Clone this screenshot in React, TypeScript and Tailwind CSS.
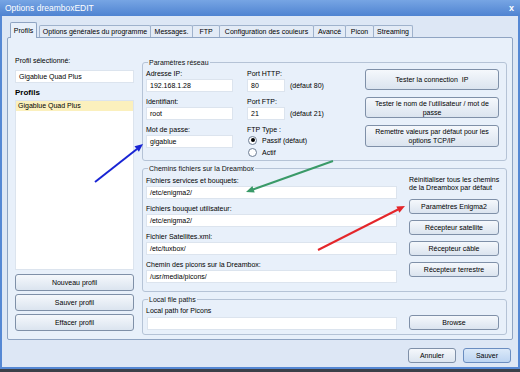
import type { ReactNode } from "react";

const tabs = [
  { label: "Profils", w: "w-[27px]", active: true },
  { label: "Options générales du programme", w: "w-[112px]" },
  { label: "Messages.", w: "w-[43px]" },
  { label: "FTP", w: "w-[28px]" },
  { label: "Configuration des couleurs", w: "w-[95px]" },
  { label: "Avancé", w: "w-[33px]" },
  { label: "Picon", w: "w-[29px]" },
  { label: "Streaming", w: "w-[40px]" },
];

function Group({ title, className, children }: { title: string; className?: string; children: ReactNode }) {
  return (
    <fieldset className={`rounded-[3px] border border-[#b5c3d6] px-[3px] ${className ?? ""}`}>
      <legend className="ml-[2px] px-[1px] leading-[9px] text-[#111]">{title}</legend>
      {children}
    </fieldset>
  );
}

function Field({ value, className }: { value?: string; className?: string }) {
  return (
    <div className={`h-[13px] border border-[#dce4ee] bg-white px-[3px] leading-[11px] ${className ?? ""}`}>
      {value}
    </div>
  );
}

function Btn({ children, className }: { children: ReactNode; className?: string }) {
  return (
    <div
      className={`flex items-center justify-center rounded-[3px] border border-[#7f90a8] bg-gradient-to-b from-[#f5f8fc] to-[#dbe4ef] text-center leading-[9px] ${className ?? ""}`}
    >
      {children}
    </div>
  );
}

export default function App() {
  return (
    <div
      className="relative h-[372px] w-[520px] overflow-hidden bg-[#3b4049] text-[7px] leading-[9px] text-black"
      style={{ fontFamily: '"Liberation Sans", Arial, sans-serif' }}
    >
      <div className="flex h-[369px] flex-col border-x-2 border-b-2 border-[#5588d4] bg-[#dde7f5]">
        {/* Title bar */}
        <div className="-mx-[2px] flex h-[16px] items-center justify-between bg-gradient-to-b from-[#77a5e4] to-[#4f83d1] px-[5px] text-[8.5px] text-white">
          <span>Options dreamboxEDIT</span>
          <span className="mr-[1px] font-bold text-[9px]">x</span>
        </div>

        <div className="flex flex-1 flex-col px-[5px] pt-[6px]">
          {/* Tabs */}
          <div className="relative z-10 -mb-px flex items-end whitespace-nowrap pl-[3px]">
            {tabs.map((t) =>
              t.active ? (
                <div
                  key={t.label}
                  className={`${t.w} mr-[2px] flex h-[16px] items-center justify-center rounded-t-[2px] border border-b-0 border-[#8fa4c2] bg-[#e8f0fa]`}
                >
                  {t.label}
                </div>
              ) : (
                <div
                  key={t.label}
                  className={`${t.w} -mr-px mb-[1px] flex h-[12px] items-center justify-center rounded-t-[2px] border border-b-0 border-[#9fb2cc] bg-[#e3ebf6]`}
                >
                  {t.label}
                </div>
              )
            )}
          </div>

          {/* Panel */}
          <div className="flex h-[303px] rounded-[2px] border border-[#8fa4c2] bg-[#e8f0fa] pl-[7px] pr-[4px]">
            {/* Left column */}
            <div className="flex w-[119px] flex-col pt-[18px]">
              <div className="h-[9px]">Profil sélectionné:</div>
              <Field value="Gigablue Quad Plus" className="mt-[5px]" />
              <div className="mt-[5px] h-[9px] text-[8px] font-bold">Profils</div>
              <div className="mt-[3px] h-[170px] border border-[#dce4ee] bg-white">
                <div className="h-[10px] bg-[#fbf0bd] px-[2px] leading-[10px]">Gigablue Quad Plus</div>
              </div>
              <div className="mt-[4px] flex flex-col gap-[3px]">
                <Btn className="h-[17px]">Nouveau profil</Btn>
                <Btn className="h-[17px]">Sauver profil</Btn>
                <Btn className="h-[17px]">Effacer profil</Btn>
              </div>
            </div>

            {/* Right column */}
            <div className="ml-[8px] flex w-[365px] flex-col pt-[20px]">
              <Group title="Paramètres réseau">
                <div className="flex pb-[2px] pt-[2px]">
                  <div className="flex w-[87px] flex-col">
                    <div className="h-[9px]">Adresse IP:</div>
                    <Field value="192.168.1.28" className="mt-[1px]" />
                    <div className="mt-[5px] h-[9px]">Identifiant:</div>
                    <Field value="root" className="mt-[1px]" />
                    <div className="mt-[5px] h-[9px]">Mot de passe:</div>
                    <Field value="gigablue" className="mt-[1px]" />
                  </div>
                  <div className="ml-[14px] flex w-[116px] flex-col">
                    <div className="h-[9px]">Port HTTP:</div>
                    <div className="mt-[1px] flex items-center">
                      <Field value="80" className="w-[38px]" />
                      <span className="ml-[5px]">(défaut 80)</span>
                    </div>
                    <div className="mt-[5px] h-[9px]">Port FTP:</div>
                    <div className="mt-[1px] flex items-center">
                      <Field value="21" className="w-[38px]" />
                      <span className="ml-[5px]">(défaut 21)</span>
                    </div>
                    <div className="mt-[5px] h-[9px]">FTP Type :</div>
                    <div className="flex h-[12px] items-center">
                      <span className="ml-[1px] flex h-[9px] w-[9px] items-center justify-center rounded-full border border-[#6d7d93] bg-white">
                        <span className="h-[4px] w-[4px] rounded-full bg-black" />
                      </span>
                      <span className="ml-[5px]">Passif (défaut)</span>
                    </div>
                    <div className="flex h-[12px] items-center">
                      <span className="ml-[1px] h-[9px] w-[9px] rounded-full border border-[#6d7d93] bg-white" />
                      <span className="ml-[5px]">Actif</span>
                    </div>
                  </div>
                  <div className="ml-[2px] flex w-[134px] flex-col gap-[7px]">
                    <Btn className="h-[21px]">Tester la connection&nbsp; IP</Btn>
                    <Btn className="h-[21px] whitespace-nowrap">
                      Tester le nom de l'utilisateur / mot de
                      <br />
                      passe
                    </Btn>
                    <Btn className="h-[22px] whitespace-nowrap">
                      Remettre valeurs par défaut pour les
                      <br />
                      options TCP/IP
                    </Btn>
                  </div>
                </div>
              </Group>

              <Group title="Chemins fichiers sur la Dreambox" className="mt-[3px]">
                <div className="flex pb-[8px] pt-[3px]">
                  <div className="flex w-[251px] flex-col">
                    <div className="h-[9px]">Fichiers services et bouquets:</div>
                    <Field value="/etc/enigma2/" className="mt-[1px]" />
                    <div className="mt-[5px] h-[9px]">Fichiers bouquet utilisateur:</div>
                    <Field value="/etc/enigma2/" className="mt-[1px]" />
                    <div className="mt-[5px] h-[9px]">Fichier Satellites.xml:</div>
                    <Field value="/etc/tuxbox/" className="mt-[1px]" />
                    <div className="mt-[5px] h-[9px]">Chemin des picons sur la Dreambox:</div>
                    <Field value="/usr/media/picons/" className="mt-[1px]" />
                  </div>
                  <div className="ml-[12px] flex w-[90px] flex-col">
                    <div className="whitespace-nowrap leading-[8px]">
                      Réinitialiser tous les chemins
                      <br />
                      de la Dreambox par défaut
                    </div>
                    <div className="mt-[7px] flex flex-col gap-[6px]">
                      <Btn className="h-[15px]">Paramètres Enigma2</Btn>
                      <Btn className="h-[15px]">Récepteur satellite</Btn>
                      <Btn className="h-[15px]">Récepteur câble</Btn>
                      <Btn className="h-[15px]">Récepteur terrestre</Btn>
                    </div>
                  </div>
                </div>
              </Group>

              <Group title="Local file paths" className="mt-[3px]">
                <div className="pb-[4px] pt-[2px]">
                  <div className="h-[9px]">Local path for Picons</div>
                  <div className="flex items-end">
                    <Field className="ml-[1px] w-[250px]" />
                    <Btn className="ml-[12px] h-[15px] w-[90px]">Browse</Btn>
                  </div>
                </div>
              </Group>
            </div>
          </div>

          {/* Dialog buttons */}
          <div className="mr-[2px] mt-[8px] flex justify-end gap-[7px]">
            <Btn className="h-[15px] w-[48px]">Annuler</Btn>
            <div className="flex h-[15px] w-[48px] items-center justify-center rounded-[3px] border border-[#6a8dc0] bg-gradient-to-b from-[#dbe9f9] to-[#bcd4f1]">
              Sauver
            </div>
          </div>
        </div>
      </div>

      {/* Annotation arrows */}
      <svg className="pointer-events-none absolute left-0 top-0" width="520" height="372" viewBox="0 0 520 372">
        <line x1="95" y1="182" x2="137" y2="149" stroke="#1824d4" strokeWidth="2" />
        <polygon points="143,144 138.9,151.7 134.5,146.3" fill="#1824d4" />
        <line x1="333" y1="161" x2="253" y2="189.5" stroke="#3a9a68" strokeWidth="2" />
        <polygon points="246,192 252.4,186 254.7,192.6" fill="#3a9a68" />
        <line x1="318" y1="250" x2="398" y2="209.5" stroke="#e4262a" strokeWidth="2" />
        <polygon points="405,206 399.4,212.7 396.3,206.5" fill="#e4262a" />
      </svg>
    </div>
  );
}
